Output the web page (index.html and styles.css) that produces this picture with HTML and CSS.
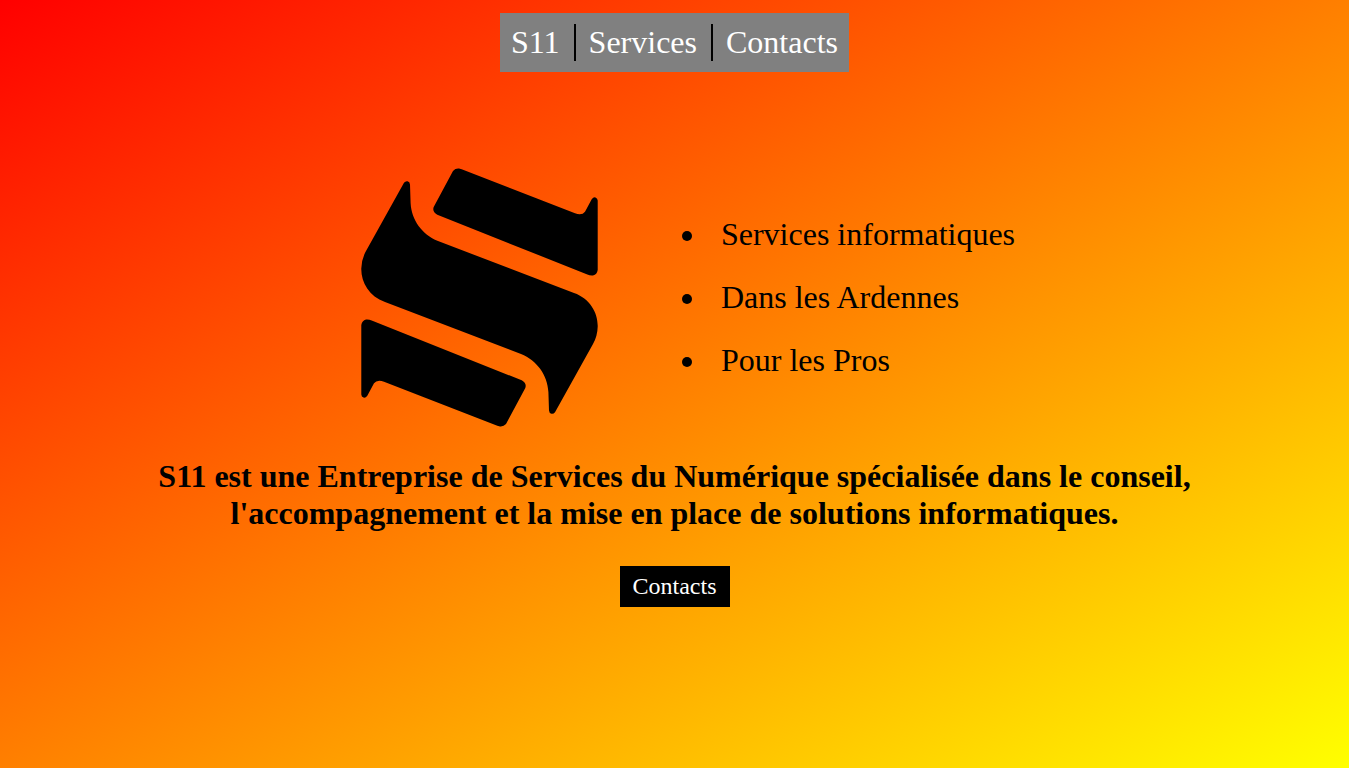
FILE: index.html
```html
<!DOCTYPE html>
<html lang="fr">
<head>
  <meta charset="utf-8">
  <meta name="viewport" content="width=device-width, initial-scale=1">
  <title>S11</title>
  <link rel="stylesheet" href="styles.css">
</head>
<body>
  <nav class="menu">
    <a class="menu-link" href="#accueil">S11</a>
    <a class="menu-link" href="#services">Services</a>
    <a class="menu-link" href="#contacts">Contacts</a>
  </nav>
  <main class="content">
    <section class="hero" id="accueil">
      <svg class="logo" viewBox="0 0 237 259" role="img" aria-label="Logo S11">
        <defs>
          <path id="blade" d="M92 3Q94.500 0.200 98 0.600L100.700 1.300L214 45.300Q221 47.700 224 43.700L230.700 31.300Q232.500 28.700 234.500 29.400Q236.600 30.200 236.700 32.500V102Q236 106.500 232 107.500Q229 107.800 226.300 106.500L76.300 46.700Q71 43.700 72.700 39Z"/>
        </defs>
        <path d="M43 14.700Q44.500 12.800 46.500 13.200Q48.800 13.700 49 16.500L49.600 35C50.500 52 61 66.500 77 73L213 125C229 130.500 237 145 236.700 158.500Q236.500 168 232 176L194 244.300Q192.500 246.200 190.500 245.800Q188.200 245.300 188 242.500L187.400 224C186.500 207 176 192.500 160 186L24 134C8 128.500 0 114 0.300 100.500Q0.500 91 5 83Z"/>
        <use href="#blade"/>
        <use href="#blade" transform="rotate(180 118.500 129.500)"/>
      </svg>
      <ul class="points" id="services">
        <li>Services informatiques</li>
        <li>Dans les Ardennes</li>
        <li>Pour les Pros</li>
      </ul>
    </section>
    <h1 class="intro">S11 est une Entreprise de Services du Numérique spécialisée dans le conseil, l'accompagnement et la mise en place de solutions informatiques.</h1>
    <a class="cta" id="contacts" href="#contacts">Contacts</a>
  </main>
</body>
</html>
```
FILE: styles.css
```css
body {
  box-sizing: border-box;
  min-height: 100vh;
  margin: 0;
  padding: 13px 8px;
  display: flex;
  flex-direction: column;
  align-items: center;
  background: linear-gradient(to bottom right, red, yellow) no-repeat;
  font-family: "Liberation Serif", "Times New Roman", serif;
  font-size: 32px;
  line-height: 37px;
  color: black;
}

.menu {
  display: flex;
  padding: 11px 0;
  background: gray;
}

.menu-link {
  padding: 0 14px 0 13px;
  color: white;
  text-decoration: none;
}

.menu-link:first-child {
  padding-left: 11px;
}

.menu-link:last-child {
  padding-right: 11px;
}

.menu-link + .menu-link {
  border-left: 2px solid black;
}

.content {
  width: 100%;
  display: flex;
  flex-direction: column;
  align-items: center;
  padding-top: 96px;
}

.hero {
  display: flex;
  align-items: center;
  justify-content: center;
  gap: 70px;
  padding-left: 27px;
}

.logo {
  width: 237px;
  height: 259px;
}

.points {
  display: flex;
  flex-direction: column;
  gap: 26px;
  margin: 0;
  padding-left: 40px;
}

.points li {
  padding-left: 13px;
}

.intro {
  max-width: 80%;
  margin: 31px 0 34px;
  font-size: 32px;
  font-weight: bold;
  text-align: center;
}

.cta {
  padding: 7px 13px;
  background: black;
  color: white;
  font-size: 24px;
  line-height: 27px;
  text-decoration: none;
}
```
